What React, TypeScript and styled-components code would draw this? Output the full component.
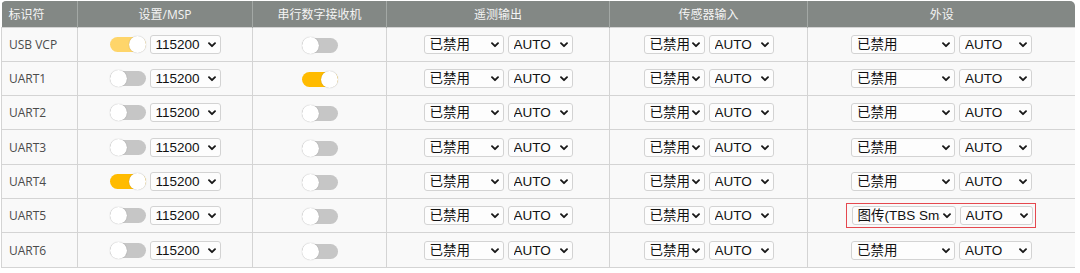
import styled, { createGlobalStyle } from "styled-components";

const GlobalStyle = createGlobalStyle`
  html, body {
    margin: 0;
    padding: 0;
    background: #ffffff;
  }
  body {
    font-family: "Open Sans", "Noto Sans CJK SC", sans-serif;
  }
`;

const Wrapper = styled.div`
  margin: 1px 0 0 1px;
  width: 1074px;
  border-radius: 5px 5px 0 0;
  overflow: hidden;
  border-bottom: 1px solid #d4d4d4;
`;

const Table = styled.table`
  width: 1074px;
  table-layout: fixed;
  border-collapse: collapse;
`;

const HeadCell = styled.th<{ $align?: string }>`
  height: 26px;
  padding: 0 0 0 ${(p) => (p.$align === "left" ? "7px" : "0")};
  box-sizing: border-box;
  background: #838885;
  color: #f4f4f4;
  font-family: "Open Sans", "Noto Sans CJK SC", sans-serif;
  font-size: 12px;
  font-weight: 400;
  text-align: ${(p) => p.$align || "center"};
  border-left: 1px solid #a3a8a5;
  &:first-child {
    border-left: none;
  }
`;

const Row = styled.tr`
  height: 34.3px;
  background: #f9f9f9;
  border-top: 1px solid #d4d4d4;
`;

const Cell = styled.td<{ $align?: string }>`
  padding: 0 0 0 ${(p) => (p.$align === "left" ? "7px" : "0")};
  text-align: ${(p) => p.$align || "center"};
  border-left: 1px solid #d4d4d4;
  border-right: 1px solid #d4d4d4;
  font-size: 12px;
  color: #4b4b4b;
  white-space: nowrap;
`;

const Group = styled.div<{ $marked?: boolean }>`
  display: inline-flex;
  align-items: center;
  gap: 4px;
  vertical-align: middle;
  ${(p) =>
    p.$marked
      ? `border: 1px solid #e5484f; padding: 2px 2px 2px 5px; margin: 0 -4px 0 -6px;`
      : ""}
`;

const SelectBox = styled.span<{ $w: number }>`
  position: relative;
  display: inline-block;
  width: ${(p) => p.$w}px;
  height: 19px;
`;

const Select = styled.select`
  appearance: none;
  -webkit-appearance: none;
  display: block;
  width: 100%;
  height: 100%;
  box-sizing: border-box;
  border: 1px solid #d3d3d3;
  border-radius: 3px;
  background: #fdfdfd;
  color: #111;
  font-family: "Liberation Sans", "Noto Sans CJK SC", sans-serif;
  font-size: 13.5px;
  line-height: 17px;
  padding: 0 15px 0 5px;
  margin: 0;
  outline: none;
  overflow: hidden;
  text-overflow: clip;
  white-space: nowrap;
`;

const Chevron = styled.svg`
  position: absolute;
  right: 5px;
  top: 7px;
  width: 8px;
  height: 6px;
  pointer-events: none;
`;

function Dropdown({ value, w }: { value: string; w: number }) {
  return (
    <SelectBox $w={w}>
      <Select defaultValue={value}>
        <option>{value}</option>
      </Select>
      <Chevron viewBox="0 0 8 6">
        <path d="M1 1.2 L4 4.2 L7 1.2" fill="none" stroke="#1a1a1a" strokeWidth="1.9" strokeLinecap="round" strokeLinejoin="round" />
      </Chevron>
    </SelectBox>
  );
}

const Track = styled.span<{ $mode: "off" | "on" | "dim" }>`
  position: relative;
  display: inline-block;
  width: 36px;
  height: 15px;
  border-radius: 8px;
  background: ${(p) =>
    p.$mode === "on" ? "#ffbb00" : p.$mode === "dim" ? "#fed56a" : "#c6c6c6"};
  vertical-align: middle;
`;

const Knob = styled.span<{ $on: boolean }>`
  position: absolute;
  top: -1px;
  ${(p) => (p.$on ? "right: 0;" : "left: 0;")}
  width: 17px;
  height: 17px;
  border-radius: 50%;
  background: #ffffff;
  box-shadow: 0 0 1px 0 rgba(0, 0, 0, 0.35);
`;

function Toggle({ mode }: { mode: "off" | "on" | "dim" }) {
  return (
    <Track $mode={mode}>
      <Knob $on={mode !== "off"} />
    </Track>
  );
}

function Pair({ first, w1, w2, marked }: { first: string; w1: number; w2: number; marked?: boolean }) {
  return (
    <Group $marked={marked}>
      <Dropdown value={first} w={w1} />
      <Dropdown value="AUTO" w={w2} />
    </Group>
  );
}

type Port = {
  name: string;
  msp: "off" | "on" | "dim";
  rx: boolean;
  periph?: string;
};

const ports: Port[] = [
  { name: "USB VCP", msp: "dim", rx: false },
  { name: "UART1", msp: "off", rx: true },
  { name: "UART2", msp: "off", rx: false },
  { name: "UART3", msp: "off", rx: false },
  { name: "UART4", msp: "on", rx: false },
  { name: "UART5", msp: "off", rx: false, periph: "图传(TBS SmartAudio)" },
  { name: "UART6", msp: "off", rx: false },
];

export default function App() {
  return (
    <>
      <GlobalStyle />
      <Wrapper>
        <Table>
          <colgroup>
            <col style={{ width: 76 }} />
            <col style={{ width: 175 }} />
            <col style={{ width: 134 }} />
            <col style={{ width: 223 }} />
            <col style={{ width: 198 }} />
            <col style={{ width: 268 }} />
          </colgroup>
          <thead>
            <tr>
              <HeadCell $align="left">标识符</HeadCell>
              <HeadCell>设置/MSP</HeadCell>
              <HeadCell>串行数字接收机</HeadCell>
              <HeadCell>遥测输出</HeadCell>
              <HeadCell>传感器输入</HeadCell>
              <HeadCell>外设</HeadCell>
            </tr>
          </thead>
          <tbody>
            {ports.map((p) => (
              <Row key={p.name}>
                <Cell $align="left">{p.name}</Cell>
                <Cell>
                  <Group>
                    <Toggle mode={p.msp} />
                    <Dropdown value="115200" w={71} />
                  </Group>
                </Cell>
                <Cell>
                  <Toggle mode={p.rx ? "on" : "off"} />
                </Cell>
                <Cell>
                  <Pair first="已禁用" w1={80} w2={65} />
                </Cell>
                <Cell>
                  <Pair first="已禁用" w1={61} w2={65} />
                </Cell>
                <Cell>
                  <Pair first={p.periph || "已禁用"} w1={104} w2={73} marked={!!p.periph} />
                </Cell>
              </Row>
            ))}
          </tbody>
        </Table>
      </Wrapper>
    </>
  );
}
